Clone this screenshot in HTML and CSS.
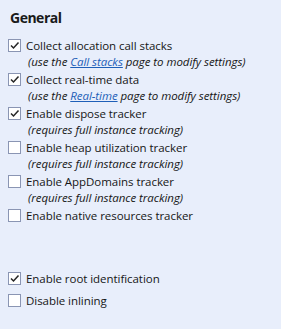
FILE: index.html
```html
<!DOCTYPE html>
<html>
<head>
<meta charset="utf-8">
<link rel="stylesheet" href="styles.css">
</head>
<body>
<div class="panel">
  <h2 class="title">General</h2>
  <ul class="opts">
    <li class="opt">
      <span class="box checked"><svg viewBox="0 0 11 11" width="11" height="11"><path d="M2 5.5 L4.5 8 L9.5 2.5" fill="none" stroke="#262626" stroke-width="1.5"/></svg></span>
      <div class="txt"><div class="main">Collect allocation call stacks</div><div class="sub">(use the <a href="#">Call stacks</a> page to modify settings)</div></div>
    </li>
    <li class="opt">
      <span class="box checked"><svg viewBox="0 0 11 11" width="11" height="11"><path d="M2 5.5 L4.5 8 L9.5 2.5" fill="none" stroke="#262626" stroke-width="1.5"/></svg></span>
      <div class="txt"><div class="main">Collect real-time data</div><div class="sub">(use the <a href="#">Real-time</a> page to modify settings)</div></div>
    </li>
    <li class="opt">
      <span class="box checked"><svg viewBox="0 0 11 11" width="11" height="11"><path d="M2 5.5 L4.5 8 L9.5 2.5" fill="none" stroke="#262626" stroke-width="1.5"/></svg></span>
      <div class="txt"><div class="main">Enable dispose tracker</div><div class="sub">(requires full instance tracking)</div></div>
    </li>
    <li class="opt">
      <span class="box"></span>
      <div class="txt"><div class="main">Enable heap utilization tracker</div><div class="sub">(requires full instance tracking)</div></div>
    </li>
    <li class="opt">
      <span class="box"></span>
      <div class="txt"><div class="main">Enable AppDomains tracker</div><div class="sub">(requires full instance tracking)</div></div>
    </li>
    <li class="opt">
      <span class="box"></span>
      <div class="txt"><div class="main">Enable native resources tracker</div></div>
    </li>
  </ul>
  <ul class="opts lower">
    <li class="opt single">
      <span class="box checked"><svg viewBox="0 0 11 11" width="11" height="11"><path d="M2 5.5 L4.5 8 L9.5 2.5" fill="none" stroke="#262626" stroke-width="1.5"/></svg></span>
      <div class="txt"><div class="main">Enable root identification</div></div>
    </li>
    <li class="opt single">
      <span class="box"></span>
      <div class="txt"><div class="main">Disable inlining</div></div>
    </li>
  </ul>
</div>
</body>
</html>
```
FILE: styles.css
```css
html, body {
  margin: 0;
  padding: 0;
  background: #e8eefb;
}
body {
  font-family: "Segoe UI", "Open Sans", "Noto Sans", sans-serif;
  color: #161616;
  width: 281px;
  height: 329px;
  overflow: hidden;
}
.panel {
  padding: 8px 0 0 8px;
}
.title {
  margin: 0 0 10px 2px;
  font-size: 14px;
  line-height: 20px;
  font-weight: bold;
  letter-spacing: -0.5px;
  color: #1a1a1a;
}
.opts {
  list-style: none;
  margin: 0;
  padding: 0;
}
.opt {
  display: flex;
  align-items: flex-start;
  gap: 5px;
  margin-bottom: 2px;
}
.opt.single {
  margin-bottom: 6px;
}
.lower {
  margin-top: 47px;
}
.box {
  flex: none;
  width: 11px;
  height: 11px;
  margin-top: 1px;
  border: 1px solid #8a95b3;
  background: #ffffff;
  display: flex;
  align-items: center;
  justify-content: center;
}
.txt {
  font-size: 11.5px;
  line-height: 16px;
  letter-spacing: -0.05px;
}
.main {
  height: 16px;
}
.sub {
  font-style: italic;
  padding-left: 2px;
  height: 16px;
}
.sub a {
  color: #1e5fb8;
  text-decoration: underline;
}
```
